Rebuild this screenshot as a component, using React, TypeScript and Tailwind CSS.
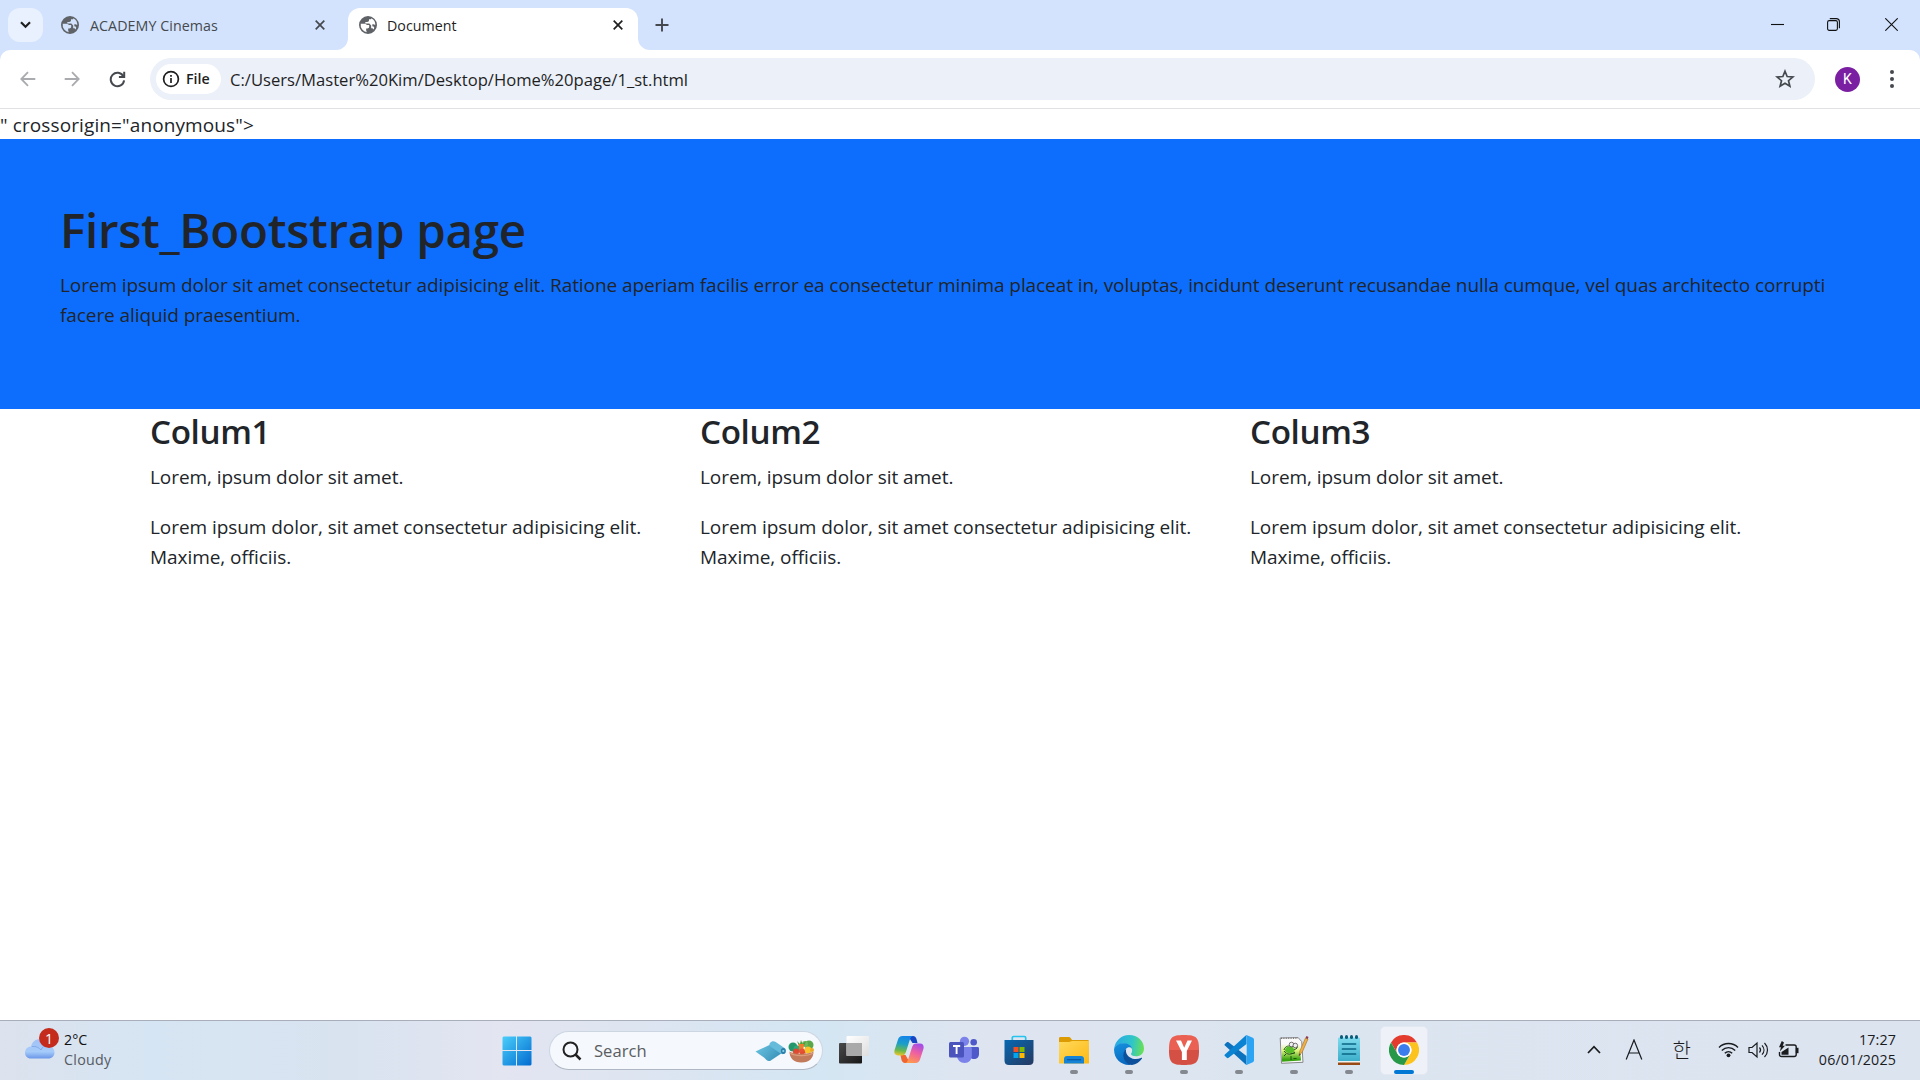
import React from "react";
import type { ReactNode } from "react";

const Globe = () => (
  <svg width="20" height="20" viewBox="0 0 24 24" fill="#5f6368" className="shrink-0">
    <path d="M12 1.2a10.8 10.8 0 1 0 0 21.6 10.8 10.8 0 0 0 0-21.6zm-1.3 19.5A8.8 8.8 0 0 1 3.3 10.6h5.2l2.4 1.4h2.5v2.1c0 1.2-1 2-2.2 2h-1.4v2.3c0 .9.4 1.6.9 2.3zm8-3.2c-.5-1-1.3-1.6-2.5-1.6h-.4v-3.3l-2.2-2.3H8.8V8.3h2.3c1.2 0 2.1-1 2.1-2.1V5.1h1.9c.7 0 1-.7.8-1.2a8.8 8.8 0 0 1 4.8 8.5c-.6-1-1.4-1.4-2.4-1.4h-1.1v2.4l2 .6c.4 1.300 0 2.300-.5 3.500z" />
  </svg>
);

const Cross = ({ color }: { color: string }) => (
  <svg width="10" height="10" viewBox="0 0 10 10" stroke={color} strokeWidth="1.7">
    <path d="M.7.7l8.600 8.600M9.300.7.7 9.300" />
  </svg>
);

function TabStrip() {
  return (
    <div className="flex h-[50px] shrink-0 bg-[#d3e3fd]">
      <div className="mt-2 ml-2 flex h-[34px] w-[35px] items-center justify-center rounded-xl bg-[#e9f1fe]">
        <svg width="11" height="8" viewBox="0 0 11 8" fill="none" stroke="#1f1f1f" strokeWidth="2.200">
          <path d="M1 1.300l4.500 4.500L10 1.300" />
        </svg>
      </div>
      <div className="ml-[17px] flex h-[50px] w-[275px] items-center">
        <Globe />
        <span className="ml-[10px] flex-1 pt-px text-[14.25px] tracking-[0.06px] text-[#45494e]">ACADEMY Cinemas</span>
        <span className="mr-[10px]"><Cross color="#45494e" /></span>
      </div>
      <div className="flex items-end">
        <div className="h-3 w-[13px] bg-white">
          <div className="h-3 w-[13px] rounded-br-xl bg-[#d3e3fd]" />
        </div>
        <div className="flex h-[42px] w-[290px] items-center rounded-t-xl bg-white pb-[8px]">
          <span className="ml-[10px]"><Globe /></span>
          <span className="ml-[9px] flex-1 pt-px text-[14.25px] text-[#1f1f1f]">Document</span>
          <span className="mr-[15px]"><Cross color="#1f1f1f" /></span>
        </div>
        <div className="h-3 w-[13px] bg-white">
          <div className="h-3 w-[13px] rounded-bl-xl bg-[#d3e3fd]" />
        </div>
      </div>
      <div className="ml-1 flex items-center">
        <svg width="14" height="14" viewBox="0 0 14 14" stroke="#45494e" strokeWidth="1.900">
          <path d="M7 .5v13M.5 7h13" />
        </svg>
      </div>
      <div className="ml-auto flex items-center pr-[22px] pb-px">
        <svg width="13" height="13" viewBox="0 0 13 13" stroke="#111" strokeWidth="1.100"><path d="M0 6.500h13" /></svg>
        <svg className="ml-[43px]" width="13" height="13" viewBox="0 0 13 13" fill="none" stroke="#111" strokeWidth="1.100">
          <rect x=".6" y="2.600" width="9.800" height="9.800" rx="1.600" />
          <path d="M2.800.6h6.400c2 0 3.200 1.200 3.200 3.200v6.400" />
        </svg>
        <svg className="ml-[45px]" width="13" height="13" viewBox="0 0 13 13" stroke="#111" strokeWidth="1.100"><path d="M.3.3l12.400 12.400M12.700.3.3 12.700" /></svg>
      </div>
    </div>
  );
}

const Arrow = ({ flip }: { flip?: boolean }) => (
  <svg className={flip ? "rotate-180" : ""} width="16" height="16" viewBox="0 0 16 16" fill="none" stroke="#a9abae" strokeWidth="1.800">
    <path d="M15.300 8H2M8 1.200L1.300 8 8 14.800" />
  </svg>
);

function Toolbar() {
  return (
    <div className="shrink-0 bg-[#d3e3fd]">
      <div className="flex h-[59px] items-center rounded-t-[10px] border-b border-[#dfe1e5] bg-white">
        <div className="ml-5 flex items-center">
          <Arrow />
          <span className="ml-[28px]"><Arrow flip /></span>
          <svg className="ml-[29px]" width="17" height="17" viewBox="0 0 17 17" fill="none" stroke="#45494e" strokeWidth="2">
            <path d="M14.300 5.200A6.700 6.700 0 1 0 15.100 9.300" />
            <path d="M15.200.8v5.300H9.900" />
          </svg>
        </div>
        <div className="ml-[24px] flex h-[42px] flex-1 items-center rounded-full bg-[#ebf0f9] pl-[6px]">
          <div className="flex h-[30px] w-[65px] items-center rounded-full bg-white pl-[6px]">
            <svg width="18" height="18" viewBox="0 0 18 18" fill="none" stroke="#1f1f1f" strokeWidth="1.700">
              <circle cx="9" cy="9" r="7.400" />
              <path d="M9 8v5M9 5v1.700" />
            </svg>
            <span className="ml-[6px] text-[14.25px] font-semibold text-[#1f1f1f]">File</span>
          </div>
          <span className="ml-[9px] pt-[2px] text-[16.63px] text-[#1f1f1f]">C:/Users/Master%20Kim/Desktop/Home%20page/1_st.html</span>
          <svg className="mr-[20px] ml-auto" width="20" height="20" viewBox="0 0 20 20" fill="none" stroke="#45494e" strokeWidth="1.700">
            <path d="M10 2.200l2.150 5.350 5.750.45-4.400 3.700 1.400 5.600L10 14.300l-4.900 3 1.400-5.600L2.100 8l5.750-.45z" />
          </svg>
        </div>
        <div className="ml-5 flex size-[25px] items-center justify-center rounded-full bg-[#7b1fa2] font-[Roboto] text-[14px] text-white">K</div>
        <div className="mr-[26px] ml-[30px] flex flex-col gap-[3px]">
          <i className="size-[4px] rounded-full bg-[#45494e]" />
          <i className="size-[4px] rounded-full bg-[#45494e]" />
          <i className="size-[4px] rounded-full bg-[#45494e]" />
        </div>
      </div>
    </div>
  );
}

function Page() {
  return (
    <main className="flex-1 bg-white text-[19px] leading-[30px] text-[#212529]">
      <div className="h-[30px] pt-px tracking-[0.11px]">" crossorigin="anonymous"&gt;</div>
      <section className="h-[270px] bg-[#0d6efd] px-[60px] pt-[61px]">
        <h1 className="mb-[10px] text-[47.5px] leading-[60px] font-semibold tracking-[-0.3px]">First_Bootstrap page</h1>
        <p className="tracking-[-0.08px]">
          Lorem ipsum dolor sit amet consectetur adipisicing elit. Ratione aperiam facilis error ea consectetur minima placeat in, voluptas, incidunt deserunt recusandae nulla cumque, vel quas architecto corrupti facere aliquid praesentium.
        </p>
      </section>
      <section className="mx-auto grid w-[1650px] grid-cols-3">
        {["Colum1", "Colum2", "Colum3"].map((title) => (
          <div key={title} className="px-[15px] tracking-[-0.06px]">
            <h3 className="mb-[10px] pt-[2px] text-[33.25px] leading-[41px] font-semibold tracking-[-0.4px]">{title}</h3>
            <p className="mb-5">Lorem, ipsum dolor sit amet.</p>
            <p>Lorem ipsum dolor, sit amet consectetur adipisicing elit. Maxime, officiis.</p>
          </div>
        ))}
      </section>
    </main>
  );
}

const TaskView = () => (
  <svg width="30" height="30" viewBox="0 0 30 30">
    <defs>
      <linearGradient id="tvd" x1="0" y1="0" x2="1" y2="1"><stop stopColor="#4a4a4a" /><stop offset="1" stopColor="#171717" /></linearGradient>
      <linearGradient id="tvl" x1="0" y1="0" x2="1" y2="1"><stop stopColor="#fff" /><stop offset="1" stopColor="#dedede" /></linearGradient>
    </defs>
    <rect x="0" y="8" width="23" height="20.500" rx="1" fill="url(#tvd)" />
    <rect x="7.500" y="1" width="22.500" height="20" rx="1" fill="url(#tvl)" />
    <path d="M7.500 8H23v13H7.500z" fill="#a9a9a9" />
  </svg>
);

const Copilot = () => (
  <svg width="30" height="30" viewBox="0 0 30 30">
    <defs>
      <linearGradient id="cpa" x1=".5" y1="0" x2=".35" y2="1"><stop stopColor="#1485e8" /><stop offset=".4" stopColor="#1b9fc9" /><stop offset=".75" stopColor="#69b84c" /><stop offset="1" stopColor="#e7c32a" /></linearGradient>
      <linearGradient id="cpb" x1=".7" y1="0" x2=".3" y2="1"><stop stopColor="#a34ee8" /><stop offset=".45" stopColor="#ee5fa3" /><stop offset="1" stopColor="#ff9a4c" /></linearGradient>
    </defs>
    <path d="M14 1h5c2 0 3 1.300 3.600 3.500L23.500 8h-5z" fill="#1745c4" />
    <path d="M16 28h-5c-2 0-3-1.300-3.600-3.500L6.500 20h5z" fill="#f0642f" />
    <path d="M8.500 1H19c-1.700.3-2.500 1.700-3.100 3.600l-4 12.400c-.8 2.400-2 3.500-4.300 3.500H4C.8 20.500-.2 18 .6 15L4 4.500C4.800 2.200 6 1 8.500 1z" fill="url(#cpa)" />
    <path d="M21.500 28H11c1.700-.3 2.500-1.700 3.100-3.600l4-12.400c.8-2.400 2-3.500 4.300-3.500H26c3.200 0 4.200 2.500 3.400 5.500L26 24.500c-.8 2.300-2 3.500-4.500 3.500z" fill="url(#cpb)" />
  </svg>
);

const Teams = () => (
  <svg width="30" height="30" viewBox="0 0 30 30">
    <circle cx="24.700" cy="7.300" r="3.300" fill="#5059c9" />
    <path d="M20 12h8.500c1 0 1.500.6 1.500 1.500V19c0 3-2 5-5 5s-5-2-5-5z" fill="#5059c9" />
    <circle cx="15.500" cy="6.300" r="4.600" fill="#7b83eb" />
    <path d="M9 12h12.500c.9 0 1.300.6 1.300 1.500v7c0 4.500-3 7.500-7.200 7.500S8 25 8 20.500z" fill="#7b83eb" />
    <rect x="0" y="7" width="15" height="15.500" rx="1.500" fill="#4b53bc" />
    <path d="M4 11h7.200M7.600 11v8" stroke="#fff" strokeWidth="1.900" />
  </svg>
);

const Store = () => (
  <svg width="30" height="30" viewBox="0 0 30 30">
    <defs><linearGradient id="sto" x1="0" y1="0" x2="1" y2="1"><stop stopColor="#0669b2" /><stop offset="1" stopColor="#263961" /></linearGradient></defs>
    <path d="M8.300 7V2.800c0-.8.500-1.300 1.300-1.300h10.800c.8 0 1.300.5 1.300 1.300V7" fill="none" stroke="#25c3ee" strokeWidth="1.700" />
    <path d="M.5 5h29v20.500c0 3-1.500 4.500-4.500 4.500H5C2 30 .5 28.500.5 25.500z" fill="url(#sto)" />
    <path d="M9.500 12h5v5h-5z" fill="#f25022" /><path d="M15.500 12h5v5h-5z" fill="#7fba00" />
    <path d="M9.500 18h5v5h-5z" fill="#00a4ef" /><path d="M15.500 18h5v5h-5z" fill="#ffb900" />
  </svg>
);

const Folder = () => (
  <svg width="30" height="30" viewBox="0 0 30 30">
    <defs><linearGradient id="fol" x1="0" y1="0" x2="1" y2="1"><stop stopColor="#ffd95c" /><stop offset="1" stopColor="#fdb913" /></linearGradient></defs>
    <path d="M0 3.500C0 2.500.5 2 1.500 2h8c1 0 1.700.4 2.500 1.500L13 5h15.500c1 0 1.500.5 1.500 1.500V15H0z" fill="#dc9a03" />
    <path d="M0 7h10c1.500 0 2-1 3-1h17v22.500H0z" fill="url(#fol)" />
    <path d="M5 28.500V24c0-2 1.200-3 3-3h14c1.800 0 3 1 3 3v4.500z" fill="#1583d6" />
    <path d="M8 24.700h14" stroke="#0a569f" strokeWidth="1.200" />
  </svg>
);

const Edge = () => (
  <svg width="30" height="30" viewBox="0 0 24 24">
    <defs>
      <linearGradient id="ea" x1="0" y1=".4" x2="1" y2=".5"><stop stopColor="#28a9e6" /><stop offset=".6" stopColor="#30c5c8" /><stop offset="1" stopColor="#6ae152" /></linearGradient>
      <linearGradient id="eb" x1=".2" y1="0" x2=".5" y2="1"><stop stopColor="#1590dd" /><stop offset="1" stopColor="#0867bf" /></linearGradient>
    </defs>
    <path d="M.1 11C.8 4.800 5.800 0 12 0c7 0 12 5 12 10.700 0 4-3 6.300-6.300 6.300-2.800 0-4.100-1-4.100-1.800 0-.6.900-1 .9-2.700 0-3-2.600-5.800-6.700-5.800C4.200 6.700 1.200 8.500.1 11z" fill="url(#ea)" />
    <path d="M.1 11C1.200 8.200 4.200 6.600 7.800 6.600c3.300 0 6 1.600 6.600 4.300-.9-1-2.200-1.300-3.300-.9-1.800.7-3 3-2.500 5.500C9.200 19 11.300 22.500 13.500 23.900 6 24.800-.5 18.700.1 11z" fill="url(#eb)" />
    <path d="M9.800 10.900c-2 1.800-2.800 4.300-2.100 7 .8 3.200 3.400 5.700 6.700 6 3.100-.3 6-2.200 7.900-4.900.4-.6-.1-1-.7-.7-3 1.400-6.600 1.100-9-.6-2.400-1.600-3.600-4.200-2.800-6.800z" fill="#0c4f9b" />
  </svg>
);

const YApp = () => (
  <svg width="30" height="30" viewBox="0 0 30 30">
    <defs><linearGradient id="yy" x1="0" y1="0" x2="0" y2="1"><stop offset=".5" stopColor="#ea6052" /><stop offset=".5" stopColor="#d55044" /></linearGradient></defs>
    <path d="M15 0c12.500 0 15 2.500 15 15s-2.500 15-15 15S0 27.500 0 15 2.500 0 15 0z" fill="url(#yy)" />
    <path d="M7 5.500h5l3.200 7.200 3.300-7.200H23L17.800 16v9h-4.900v-8z" fill="#fff" />
  </svg>
);

const VSCode = () => (
  <svg width="30" height="30" viewBox="0 0 30 30">
    <path d="M1.200 8.700l1.600-1.400c.7-.6 1.200-.5 1.800-.1L22.500 21v8.500c-.8 0-1.200-.3-1.600-.7L.9 10.600C.2 10 .5 9.300 1.200 8.700z" fill="#0b72be" />
    <path d="M1.200 21.300l1.600 1.400c.7.6 1.200.5 1.800.1L22.500 9V.5c-.8 0-1.200.3-1.600.7L.9 19.400c-.7.600-.4 1.300.3 1.900z" fill="#0a83d2" />
    <path d="M21 .4c.6-.5 1.300-.5 2-.2l5.800 2.600c.8.4 1.200 1 1.200 1.900v20.600c0 .9-.4 1.500-1.200 1.900L23 29.800c-.7.3-1.400.3-2-.2 1 .3 1.700-.3 1.700-1.300V1.700C22.700.7 22 .1 21 .4z" fill="#2ba5f3" />
  </svg>
);

const NotepadPP = () => (
  <svg width="30" height="30" viewBox="0 0 30 30">
    <defs><linearGradient id="npp" x1="0" y1="0" x2="0" y2="1"><stop offset=".2" stopColor="#fafafa" /><stop offset=".5" stopColor="#dcf37c" /><stop offset=".9" stopColor="#3aa312" /></linearGradient></defs>
    <path d="M1.200 3l18-.4 3.500 4L24 27.300l-21.500 1z" fill="#fafafa" stroke="#888" strokeWidth="1" />
    <path d="M2.500 4.500l18 1 1.500 20-19 1.200z" fill="url(#npp)" />
    <path d="M2 3.200h17" stroke="#555" strokeDasharray="1 1.400" />
    <path d="M5 15c1-4 5-5 9-3 2-3 5-2 4 1-1 2-5 1-7 3s2 3 5 2M5 16c3 4 7 4 11 1M7 19l-2 2" fill="none" stroke="#214d18" strokeWidth="1" />
    <path d="M7 13c2-2 6-2 8 1s-3 5-6 4-4-3-2-5z" fill="#57bd28" />
    <circle cx="12.500" cy="9.500" r="2.300" fill="#eee" stroke="#555" strokeWidth=".8" />
    <circle cx="16.300" cy="10.500" r="2.300" fill="#eee" stroke="#555" strokeWidth=".8" />
    <path d="M12 21v4M14.500 23.500h3" stroke="#155b0b" strokeWidth="1" />
    <path d="M20 21l1-5.500L26.500 3l2.500 1-5.500 12.500z" fill="#efb145" stroke="#a16c25" strokeWidth=".6" />
    <path d="M26.500 3l1-1.900 2 .9-.7 2z" fill="#8e394d" />
    <path d="M20 21l.5-2.500 1.200.7z" fill="#333" />
  </svg>
);

const Notepad = () => (
  <svg width="30" height="30" viewBox="0 0 30 30">
    <defs><linearGradient id="np" x1="0" y1="0" x2="0" y2="1"><stop stopColor="#7fdbee" /><stop offset="1" stopColor="#3dafcb" /></linearGradient></defs>
    <path d="M4 25h22v5H4z" fill="#984a16" /><path d="M4 24h22v3.500H4z" fill="#f2f2f2" />
    <path d="M4 4c0-1 .5-1.500 1.500-1.500h19c1 0 1.500.5 1.500 1.500v22H4z" fill="url(#np)" />
    <path d="M8.500 9h13M8.500 14h13M8.500 19h13" stroke="#0b6685" strokeWidth="1.700" strokeLinecap="round" />
    <g fill="#0b5c79">
      <rect x="6" y="0" width="3" height="4" rx="1.500" /><rect x="11" y="0" width="3" height="4" rx="1.500" />
      <rect x="16" y="0" width="3" height="4" rx="1.500" /><rect x="21" y="0" width="3" height="4" rx="1.500" />
    </g>
  </svg>
);

const Chrome = () => (
  <svg width="30" height="30" viewBox="0 0 48 48">
    <circle cx="24" cy="24" r="24" fill="#fff" />
    <path d="M3.200 12A24 24 0 0 1 44.800 12H24a12 12 0 0 0-10.400 18z" fill="#e33b2e" />
    <path d="M44.800 12A24 24 0 0 1 24 48l10.400-18A12 12 0 0 0 24 12z" fill="#fcc31e" />
    <path d="M24 48A24 24 0 0 1 3.200 12l10.400 18a12 12 0 0 0 20.800 0z" fill="#279847" />
    <circle cx="24" cy="24" r="12" fill="#fff" /><circle cx="24" cy="24" r="9.500" fill="#3b7ded" />
  </svg>
);

const Start = () => (
  <svg width="30" height="30" viewBox="0 0 30 30">
    <defs><linearGradient id="win" gradientUnits="userSpaceOnUse" x1="0" y1="0" x2="30" y2="30"><stop stopColor="#4bd0fb" /><stop offset="1" stopColor="#0069cf" /></linearGradient></defs>
    <path d="M1.500.5H14V14H.500V1.500zM15 .5h13.500l1 1V14H15zM.5 15H14v14.500H1.500l-1-1zM15 15h14.500v13.500l-1 1H15z" fill="url(#win)" />
  </svg>
);

const YogaMat = () => (
  <svg width="32" height="24" viewBox="0 0 32 24">
    <defs><linearGradient id="mat" x1="0" y1="0" x2="1" y2=".6"><stop stopColor="#6cc6e2" /><stop offset="1" stopColor="#3c93bb" /></linearGradient></defs>
    <path d="M.5 12.500L15.500 5.500 27 14l-12 8c-1.500.3-2.500 0-3.500-1C8 17 4 15.500.5 12.500z" fill="url(#mat)" />
    <path d="M15 4c1.500-2 3.500-2.300 5.300-1.300L29.500 9c2.300 1.700 1.800 5.300-.7 6-1.400.4-2.600 0-3.600-.7L15.500 7.500C14.200 6.500 14.200 5 15 4z" fill="#66bbdb" />
    <ellipse cx="28.300" cy="12" rx="2.400" ry="2.900" fill="#2d7fa8" /><circle cx="28.300" cy="12" r="1.100" fill="#8bd3ec" />
  </svg>
);

const Basket = () => (
  <svg width="27" height="24" viewBox="0 0 27 24">
    <circle cx="5" cy="8" r="4.500" fill="#23966c" /><circle cx="9" cy="10" r="3.500" fill="#2faa78" />
    <circle cx="21" cy="6" r="4.500" fill="#58a84b" /><circle cx="17" cy="5" r="3" fill="#71b85c" />
    <path d="M9 2l3 3 1-4 1.500 4L18 2l-2 5h-5z" fill="#4c9a36" />
    <path d="M10.500 5h5.500l-1 8h-3.500z" fill="#ef7d2c" />
    <circle cx="20" cy="11" r="3.500" fill="#f8c229" /><circle cx="24" cy="11" r="2" fill="#e9a927" />
    <circle cx="8" cy="12.500" r="3" fill="#dc4830" /><circle cx="14" cy="12.500" r="3" fill="#e75335" />
    <path d="M1.500 12.500c4 3 20 3 24 0 0 6.500-4 11-12 11s-12-4.500-12-11z" fill="#c27a5a" />
    <path d="M2 14c5 3.500 18 3.500 23 0" stroke="#dc9c7c" strokeWidth="1.200" fill="none" />
    <path d="M5 13.700c1-2.500 5-2.500 6 .8M12 14.500c1-2.500 5-2.500 6-.3" fill="#e04c31" />
  </svg>
);

const apps: { name: string; icon: ReactNode; running?: boolean }[] = [
  { name: "taskview", icon: <TaskView /> },
  { name: "copilot", icon: <Copilot /> },
  { name: "teams", icon: <Teams /> },
  { name: "store", icon: <Store /> },
  { name: "explorer", icon: <Folder />, running: true },
  { name: "edge", icon: <Edge />, running: true },
  { name: "y", icon: <YApp />, running: true },
  { name: "vscode", icon: <VSCode />, running: true },
  { name: "npp", icon: <NotepadPP />, running: true },
  { name: "notepad", icon: <Notepad />, running: true },
];

function Taskbar() {
  return (
    <footer className="grid h-[60px] shrink-0 grid-cols-[502px_1fr_auto] border-t border-[#a9afba] bg-[linear-gradient(90deg,#dce2ee_0px,#d6e5f3_150px,#d9e3f0_350px,#e3e5f1_500px,#dde5f1_640px,#d4e6f3_820px,#dfe5f0_1000px,#dbe5f0_1250px,#dce4f0_1920px)]">
      <div className="flex pl-[24px]">
        <div className="relative mt-[13px] h-[30px] w-[32px]">
          <svg width="32" height="28" viewBox="0 0 32 28">
            <defs><linearGradient id="cl" x1="0" y1="0" x2="0" y2="1"><stop stopColor="#a2c2f7" /><stop offset=".65" stopColor="#a5cbfa" /><stop offset="1" stopColor="#6a96e8" /></linearGradient></defs>
            <path d="M7 24.500c-8 0-8-11.500 0-12C8.500 4 20 2 23.500 11.500c9 .5 9.500 13 .5 13z" fill="url(#cl)" />
            <path d="M8 12.500c4-.5 7 1 9 3.500 1-3 3.500-4.500 6.500-4.500" fill="none" stroke="#84abe9" />
          </svg>
          <span className="absolute -top-[6px] left-[15px] flex size-[20px] items-center justify-center rounded-full bg-[#c42b1c] text-[14px] text-white">1</span>
        </div>
        <div className="ml-[8px] pt-[9px] text-[14.25px] leading-5 text-[#111]">
          <div>2°C</div>
          <div className="tracking-[0.3px] text-[#555b62]">Cloudy</div>
        </div>
      </div>
      <div className="flex items-center">
        <Start />
        <div className="ml-[17px] flex h-[39px] w-[274px] items-center rounded-full border border-b-[#aeb7c3] border-[#ccd6e3] bg-[#f5f8fc] pl-[12px]">
          <svg width="20" height="20" viewBox="0 0 20 20" fill="none" stroke="#222" strokeWidth="2">
            <circle cx="8.500" cy="8.500" r="7" /><path d="M13.500 13.500l5 5" strokeWidth="2.500" />
          </svg>
          <span className="ml-[12px] pt-px text-[16.63px] text-[#5a5d61]">Search</span>
          <span className="mr-[7px] ml-auto flex items-center gap-px"><YogaMat /><Basket /></span>
        </div>
        <div className="ml-[3px] flex">
          {apps.map((a) => (
            <div key={a.name} className="flex h-[59px] w-[55px] flex-col items-center pt-[14px]">
              {a.icon}
              {a.running && <i className="mt-[5px] h-1 w-2 rounded-full bg-[#84888f]" />}
            </div>
          ))}
          <div className="mt-[5px] ml-[4px] flex h-[49px] w-[48px] flex-col items-center rounded-[5px] border border-[#e3e8f1] bg-[#eef2f8] pt-[8px]">
            <Chrome />
            <i className="mt-[5px] h-1 w-5 rounded-full bg-[#0078d4]" />
          </div>
        </div>
      </div>
      <div className="flex items-center pr-[24px] pb-[2px] text-[#191b1e]">
        <svg width="14" height="9" viewBox="0 0 14 9" fill="none" stroke="currentColor" strokeWidth="1.700"><path d="M1 8l6-6.300L13 8" /></svg>
        <svg className="ml-[24px]" width="18" height="21" viewBox="0 0 18 21" fill="none" stroke="currentColor" strokeWidth="1.200"><path d="M1.200 20.500L9 1l7.800 19.500M3.800 14h10.400" /></svg>
        <span className="ml-[29px] font-['Noto_Sans_CJK_KR',sans-serif] text-[20px] leading-6 font-light">한</span>
        <div className="ml-[27px] flex items-center">
          <svg width="21" height="17" viewBox="0 0 21 17" fill="none" stroke="currentColor" strokeWidth="1.400">
            <path d="M1 6.500c5.300-5.300 13.700-5.300 19 0M3.800 9.500c3.800-3.800 9.600-3.800 13.400 0M6.800 12.300c2.100-2.100 5.300-2.100 7.400 0" /><circle cx="10.500" cy="14.300" r="1.900" fill="currentColor" stroke="none" />
          </svg>
          <svg className="ml-[9px]" width="21" height="18" viewBox="0 0 21 18" fill="none" stroke="currentColor" strokeWidth="1.200">
            <path d="M1 6.500h3L9 2v14l-5-4.500H1z" /><path d="M11.500 6.500c1.300 1.500 1.300 3.500 0 5M14 4.300c2.600 2.800 2.600 6.600 0 9.400M16.500 2c4 4 4 10 0 14" />
          </svg>
          <svg className="ml-[9px]" width="21" height="18" viewBox="0 0 21 18" fill="none" stroke="currentColor" strokeWidth="1.400">
            <path d="M7.500 4h8.700c1.300 0 2 .7 2 2v7.500c0 1.300-.7 2-2 2H3.500c-1.300 0-2-.7-2-2V11" />
            <path d="M18.500 7.500h1.300v4h-1.300z" fill="currentColor" />
            <path d="M3.500 13.800V11l7-4.500v7.300z" fill="currentColor" stroke="none" />
            <path d="M3.800 0L1 6.300h2L1.800 10.500 7 4.800H4.700L6 1.500z" fill="currentColor" stroke="none" />
          </svg>
        </div>
        <div className="ml-[20px] text-right text-[14.25px] leading-5 tracking-[0.15px]">
          <div>17:27</div>
          <div>06/01/2025</div>
        </div>
      </div>
    </footer>
  );
}

export default function App() {
  return (
    <div className="flex h-[1080px] w-[1920px] flex-col overflow-hidden bg-white font-['Open_Sans',sans-serif]">
      <TabStrip />
      <Toolbar />
      <Page />
      <Taskbar />
    </div>
  );
}
